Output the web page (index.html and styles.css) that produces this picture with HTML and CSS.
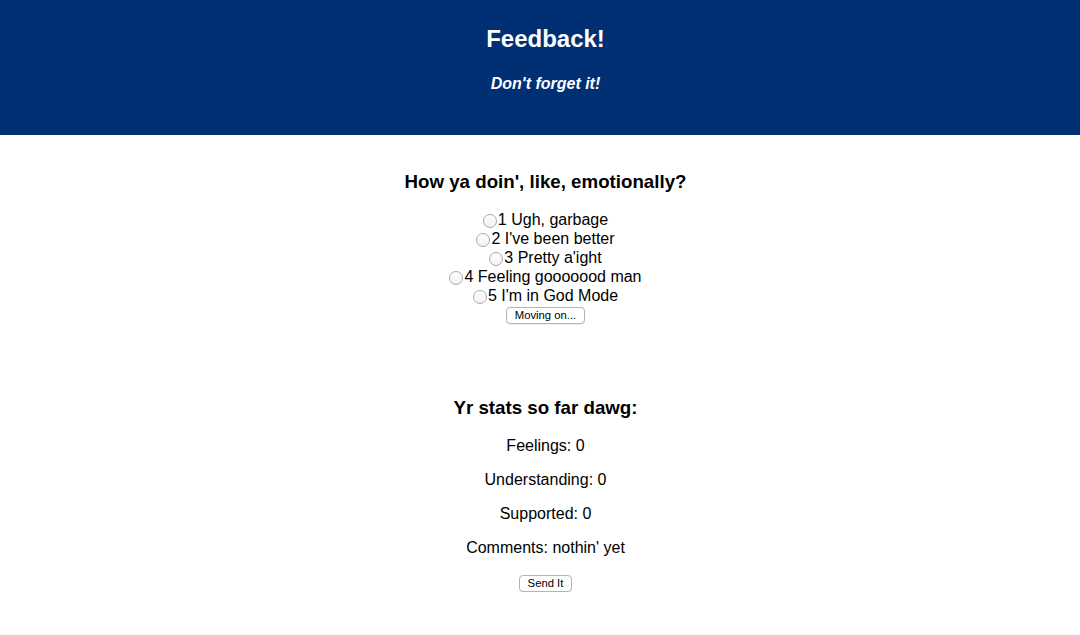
FILE: index.html
```html
<!DOCTYPE html>
<html>
<head>
<meta charset="utf-8">
<title>Feedback!</title>
<link rel="stylesheet" href="styles.css">
</head>
<body>
<header class="banner">
  <h1 class="banner-title">Feedback!</h1>
  <h2 class="banner-sub">Don't forget it!</h2>
</header>
<main class="main">
  <section class="question">
    <h3 class="section-title">How ya doin', like, emotionally?</h3>
    <div class="options">
      <label class="option"><input type="radio" name="feel" class="radio">1 Ugh, garbage</label>
      <label class="option"><input type="radio" name="feel" class="radio">2 I've been better</label>
      <label class="option"><input type="radio" name="feel" class="radio">3 Pretty a'ight</label>
      <label class="option"><input type="radio" name="feel" class="radio">4 Feeling gooooood man</label>
      <label class="option"><input type="radio" name="feel" class="radio">5 I'm in God Mode</label>
    </div>
    <button class="btn btn-next" type="button">Moving on...</button>
  </section>
  <section class="stats">
    <h3 class="section-title">Yr stats so far dawg:</h3>
    <p class="stat">Feelings: 0</p>
    <p class="stat">Understanding: 0</p>
    <p class="stat">Supported: 0</p>
    <p class="stat">Comments: nothin' yet</p>
    <button class="btn btn-send" type="button">Send It</button>
  </section>
</main>
</body>
</html>
```

FILE: styles.css
```css
html, body {
  margin: 0;
  padding: 0;
  background: #ffffff;
}
body {
  font-family: "Liberation Sans", Arial, Helvetica, sans-serif;
  color: #000;
}
.banner {
  background: #003073;
  color: #fff;
  height: 135px;
  box-sizing: border-box;
  padding: 25px 0 0 11px;
  display: flex;
  flex-direction: column;
  align-items: center;
}
.banner-title {
  margin: 0;
  font-size: 24px;
  line-height: 28px;
  font-weight: bold;
}
.banner-sub {
  margin: 22px 0 0;
  font-size: 16px;
  line-height: 18px;
  font-weight: bold;
  font-style: italic;
}
.main {
  display: flex;
  flex-direction: column;
  align-items: center;
  padding-left: 11px;
}
.question, .stats {
  display: flex;
  flex-direction: column;
  align-items: center;
}
.question {
  padding-top: 36px;
}
.stats {
  padding-top: 73px;
}
.section-title {
  margin: 0;
  font-size: 18.72px;
  line-height: 22px;
  font-weight: bold;
}
.options {
  margin-top: 16.5px;
  display: flex;
  flex-direction: column;
  align-items: center;
}
.option {
  font-size: 16px;
  line-height: 19px;
  height: 19px;
  display: flex;
  align-items: center;
}
.radio {
  -webkit-appearance: none;
  appearance: none;
  width: 14px;
  height: 14px;
  margin: 3px 1px 0 0;
  border: 1px solid #a9a9a9;
  border-radius: 50%;
  background: linear-gradient(#ffffff, #f2f2f2);
  box-sizing: border-box;
}
.btn {
  font-family: "Liberation Sans", Arial, Helvetica, sans-serif;
  font-size: 11.3px;
  line-height: 13px;
  color: #000;
  background: #fff;
  border: 1px solid #b3b3b3;
  border-radius: 4px;
  padding: 1px 8px;
  height: 17px;
  box-sizing: border-box;
  box-shadow: 0 1px 0 rgba(0,0,0,0.06);
}
.btn-next {
  margin-top: 2.5px;
}
.stats .section-title {
  margin-bottom: 18px;
}
.stat {
  margin: 0 0 16px;
  font-size: 16px;
  line-height: 18px;
}
.btn-send {
  margin-top: 2px;
}
```
